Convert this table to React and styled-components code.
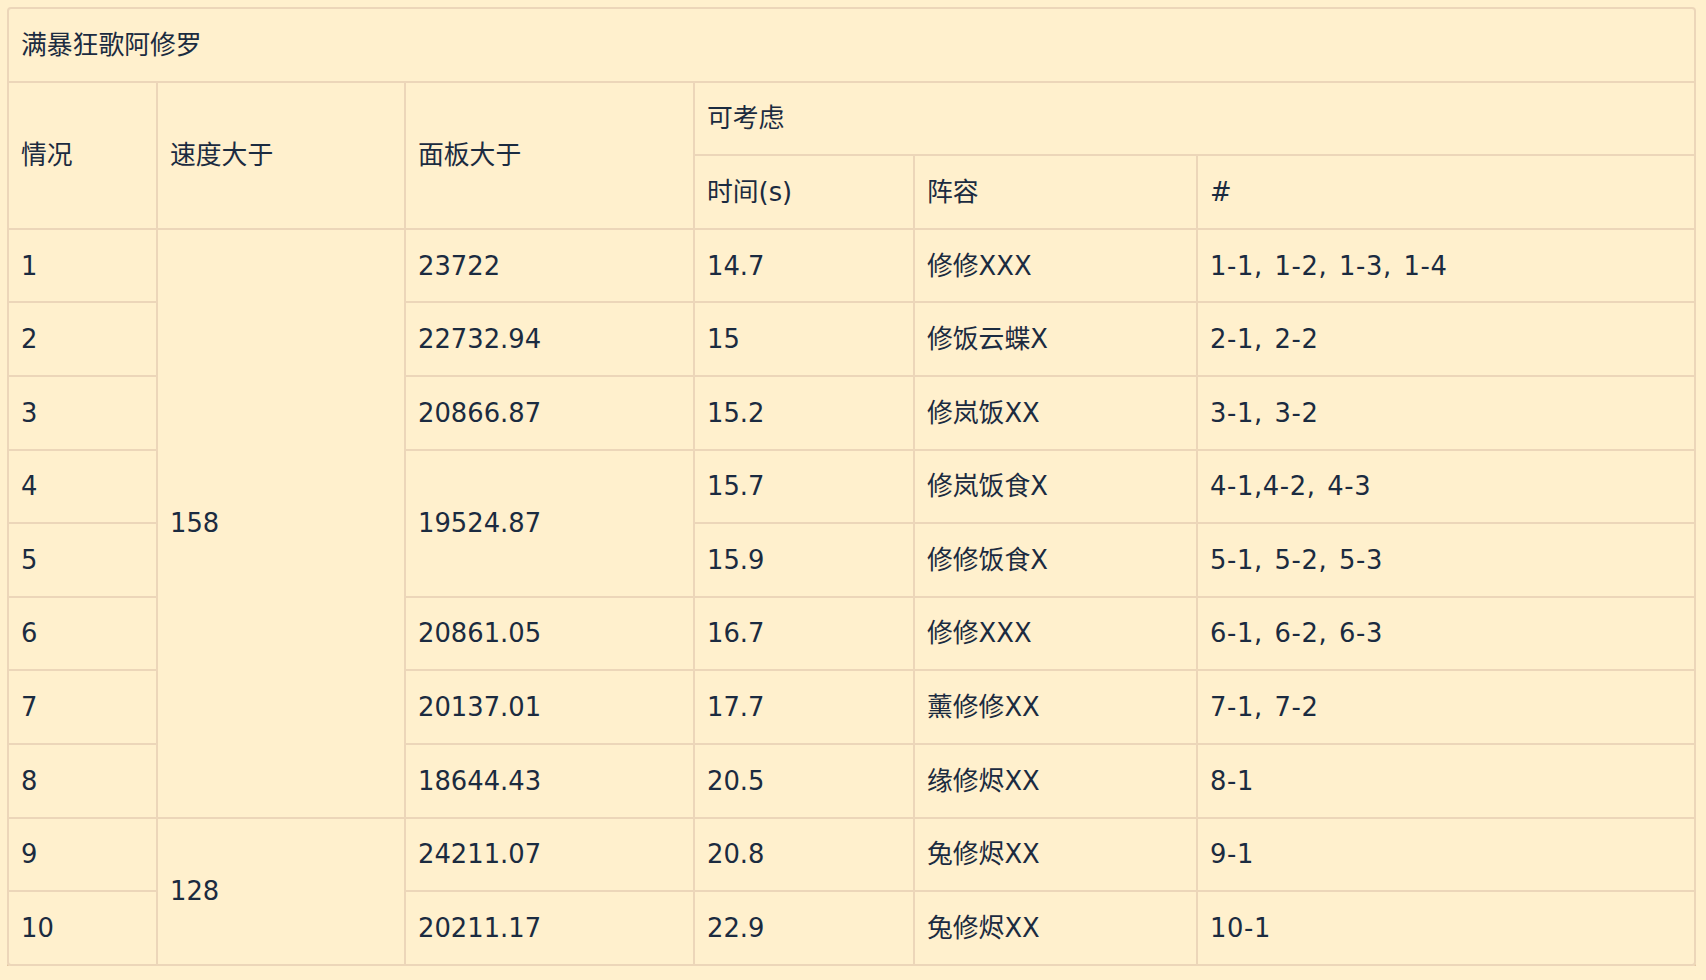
import React from "react";
import styled, { createGlobalStyle } from "styled-components";

const rows = [
  { no: "1", panel: "23722", time: "14.7", team: "修修XXX", ids: "1-1, 1-2, 1-3, 1-4" },
  { no: "2", panel: "22732.94", time: "15", team: "修饭云蝶X", ids: "2-1, 2-2" },
  { no: "3", panel: "20866.87", time: "15.2", team: "修岚饭XX", ids: "3-1, 3-2" },
  { no: "4", panel: "19524.87", panelSpan: 2, time: "15.7", team: "修岚饭食X", ids: "4-1,4-2, 4-3" },
  { no: "5", time: "15.9", team: "修修饭食X", ids: "5-1, 5-2, 5-3" },
  { no: "6", panel: "20861.05", time: "16.7", team: "修修XXX", ids: "6-1, 6-2, 6-3" },
  { no: "7", panel: "20137.01", time: "17.7", team: "薰修修XX", ids: "7-1, 7-2" },
  { no: "8", panel: "18644.43", time: "20.5", team: "缘修烬XX", ids: "8-1" },
  { no: "9", speed: "128", speedSpan: 2, panel: "24211.07", time: "20.8", team: "兔修烬XX", ids: "9-1" },
  { no: "10", panel: "20211.17", time: "22.9", team: "兔修烬XX", ids: "10-1" },
];

export default function App() {
  return (
    <>
      <GlobalStyle />
      <StWrapper>
        <StTable>
          <colgroup>
            <col style={{ width: 148 }} />
            <col style={{ width: 248 }} />
            <col style={{ width: 289 }} />
            <col style={{ width: 220 }} />
            <col style={{ width: 283 }} />
            <col />
          </colgroup>
          <tbody>
            <tr>
              <StCell colSpan={6}>满暴狂歌阿修罗</StCell>
            </tr>
            <tr>
              <StCell rowSpan={2}>情况</StCell>
              <StCell rowSpan={2}>速度大于</StCell>
              <StCell rowSpan={2}>面板大于</StCell>
              <StCell colSpan={3}>可考虑</StCell>
            </tr>
            <tr>
              <StCell>时间(s)</StCell>
              <StCell>阵容</StCell>
              <StCell>#</StCell>
            </tr>
            {rows.map((r, i) => (
              <tr key={r.no}>
                <StCell>{r.no}</StCell>
                {i === 0 && <StCell rowSpan={8}>158</StCell>}
                {r.speed && <StCell rowSpan={r.speedSpan}>{r.speed}</StCell>}
                {r.panel && <StCell rowSpan={r.panelSpan || 1}>{r.panel}</StCell>}
                <StCell>{r.time}</StCell>
                <StCell>{r.team}</StCell>
                <StCell $loose>{r.ids}</StCell>
              </tr>
            ))}
          </tbody>
        </StTable>
      </StWrapper>
    </>
  );
}

const GlobalStyle = createGlobalStyle`
  html, body {
    margin: 0;
    padding: 0;
    background: #fff0cd;
  }
  body {
    font-family: "DejaVu Sans", "Noto Sans CJK SC", sans-serif;
    color: #1b2b40;
  }
`;

const StWrapper = styled.div`
  margin: 7px 10px 0 7px;
  border: 2px solid #ecd6b9;
  border-radius: 4px;
  overflow: hidden;
  box-shadow: 0 3px 0 #e3c6a4;
`;

const StTable = styled.table`
  width: 100%;
  table-layout: fixed;
  border-collapse: collapse;
  border-style: hidden;
`;

const StCell = styled.td`
  height: 71.6px;
  padding: 0 12px;
  border: 2px solid #ecd6b9;
  font-size: 25.8px;
  line-height: 1.4;
  vertical-align: middle;
  text-align: left;
  white-space: nowrap;
  word-spacing: ${(p) => (p.$loose ? "3px" : "normal")};
  letter-spacing: ${(p) => (p.$loose ? "0.6px" : "normal")};
`;
